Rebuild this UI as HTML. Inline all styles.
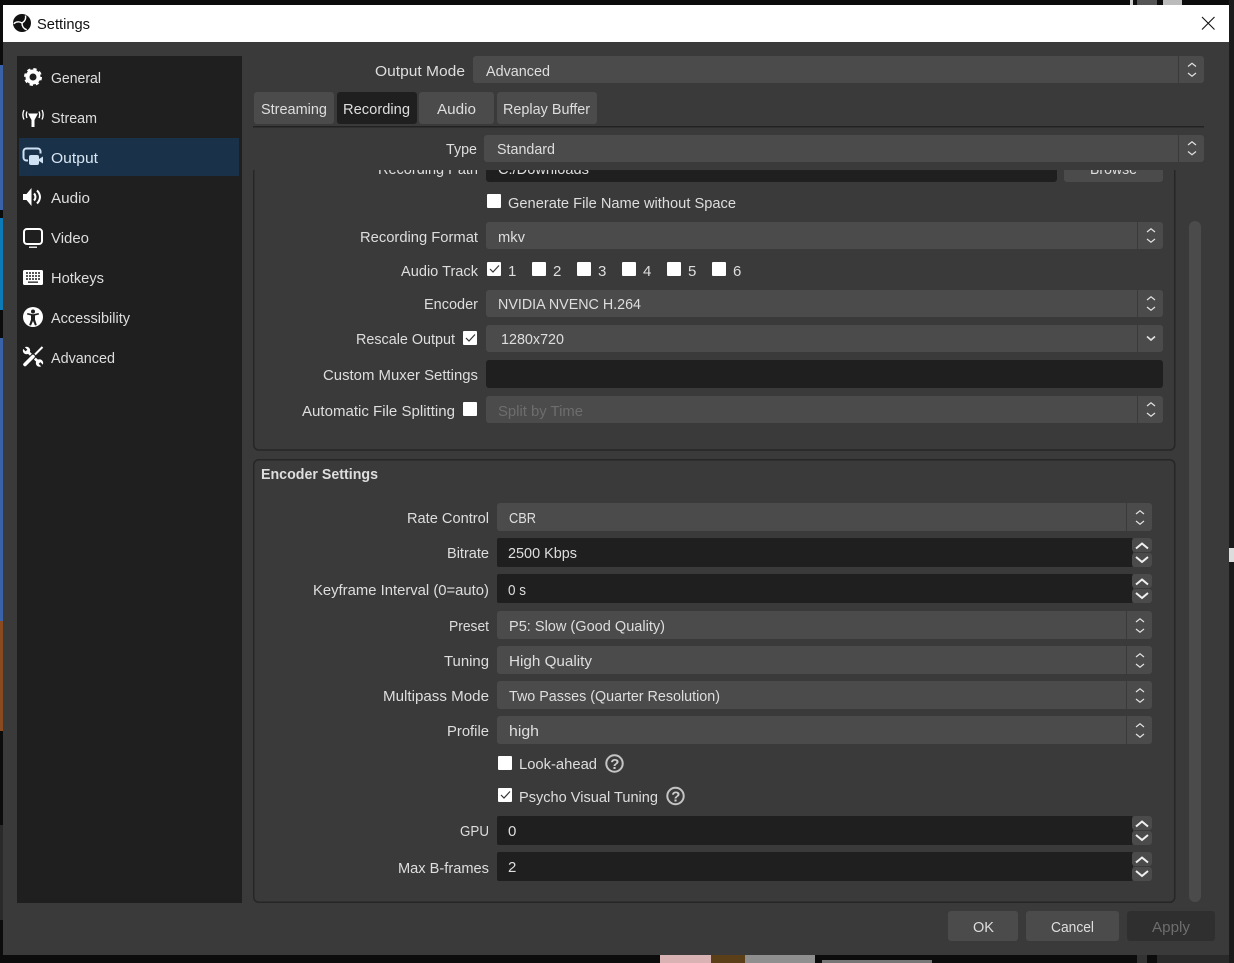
<!DOCTYPE html>
<html lang="en">
<head>
<meta charset="utf-8">
<title>Settings</title>
<style>
html,body{margin:0;padding:0;background:#0c0c0c;width:1234px;height:963px;overflow:hidden}
svg{display:block}
text{font-family:"Liberation Sans",sans-serif;font-size:15px;fill:#dedede}
.b{font-weight:bold}
.d{fill:#6d6d6d}
.t{fill:#111}
.c{fill:#4b4b4b}
.f{fill:#1f1f1f}
.dv{fill:#3a3a3a}
.ar{fill:none;stroke:#e2e2e2;stroke-width:1.2}
.sp{fill:none;stroke:#f0f0f0;stroke-width:2}
.ck{fill:#fff}
.tk{fill:none;stroke:#333;stroke-width:1.2}
.i{fill:#fff}
.is{fill:none;stroke:#fff}
</style>
</head>
<body>
<svg width="1234" height="963" viewBox="0 0 1234 963" xmlns="http://www.w3.org/2000/svg">
<defs><clipPath id="sc"><rect x="244" y="170" width="960" height="740"/></clipPath></defs>
<!-- desktop behind -->
<rect width="1234" height="963" fill="#0c0c0c"/>
<rect x="0" y="65" width="3" height="145" fill="#3a62a8"/>
<rect x="0" y="218" width="3" height="92" fill="#0b7ab6"/>
<rect x="0" y="338" width="3" height="283" fill="#3a62a8"/>
<rect x="0" y="621" width="3" height="110" fill="#8a4a20"/>
<rect x="0" y="825" width="3" height="95" fill="#2a2a2a"/>
<rect x="1229" y="0" width="5" height="963" fill="#1b1b1b"/>
<rect x="1229" y="548" width="5" height="14" fill="#ddd"/>
<rect x="1130" y="0" width="3" height="5" fill="#ccc"/>
<rect x="1137" y="0" width="20" height="5" fill="#555"/>
<rect x="1163" y="0" width="19" height="5" fill="#bbb"/>
<rect x="660" y="955" width="51" height="8" fill="#d9b3b3"/>
<rect x="711" y="955" width="34" height="8" fill="#5a3f18"/>
<rect x="745" y="955" width="70" height="8" fill="#8f8f8f"/>
<rect x="822" y="960" width="110" height="3" fill="#777"/>
<rect x="1137" y="955" width="10" height="8" fill="#333"/>
<rect x="1157" y="955" width="72" height="8" fill="#2a2a2a"/>
<!-- dialog -->
<rect x="3" y="5" width="1226" height="37" fill="#fff"/>
<rect x="3" y="42" width="1226" height="913" fill="#3a3a3a"/>
<circle cx="22" cy="23" r="9" fill="#111"/>
<path d="M22 23Q26.500 20.500 25.500 15.500" fill="none" stroke="#fff" stroke-width="1.400"/>
<path d="M22 23Q26.500 20.500 25.500 15.500" fill="none" stroke="#fff" stroke-width="1.400" transform="rotate(120 22 23)"/>
<path d="M22 23Q26.500 20.500 25.500 15.500" fill="none" stroke="#fff" stroke-width="1.400" transform="rotate(240 22 23)"/>
<text class="t" x="37" y="29" textLength="53" lengthAdjust="spacingAndGlyphs">Settings</text>
<path d="M1202 17l12.500 12.500M1214.500 17L1202 29.500" stroke="#111" stroke-width="1.100" fill="none"/>

<!-- sidebar -->
<rect x="17" y="56" width="225" height="847" fill="#1f1f1f"/>
<rect x="19" y="138" width="220" height="38" fill="#1a3249"/>
<text x="51" y="83" textLength="50" lengthAdjust="spacingAndGlyphs">General</text>
<text x="51" y="123" textLength="46" lengthAdjust="spacingAndGlyphs">Stream</text>
<text x="51" y="163" textLength="47" lengthAdjust="spacingAndGlyphs" style="fill:#d8e6f2">Output</text>
<text x="51" y="203" textLength="39" lengthAdjust="spacingAndGlyphs">Audio</text>
<text x="51" y="243" textLength="38" lengthAdjust="spacingAndGlyphs">Video</text>
<text x="51" y="283" textLength="53" lengthAdjust="spacingAndGlyphs">Hotkeys</text>
<text x="51" y="323" textLength="79" lengthAdjust="spacingAndGlyphs">Accessibility</text>
<text x="51" y="363" textLength="64" lengthAdjust="spacingAndGlyphs">Advanced</text>
<!-- gear -->
<circle cx="33" cy="77" r="5.500" class="is" stroke-width="4"/>
<circle cx="33" cy="77" r="8" fill="none" stroke="#fff" stroke-width="2" stroke-dasharray="3.300 3"/>
<!-- antenna -->
<path d="M28 113.500h10L34.500 120v7h-3v-7z" class="i"/>
<path d="M27 111.500a8 8 0 0 0 0 6.500M24 110a11 11 0 0 0 0 9.500M39 111.500a8 8 0 0 1 0 6.500M42 110a11 11 0 0 1 0 9.500" class="is" stroke-width="1.300"/>
<!-- output -->
<path d="M28 160.500h-1.500a3 3 0 0 1-3-3v-6a3 3 0 0 1 3-3h11a3 3 0 0 1 3 3v2" fill="none" stroke="#cfe2f3" stroke-width="2"/>
<rect x="29" y="155" width="10" height="10" rx="2" fill="#cfe2f3"/>
<path d="M39 159l4-2.500v7L39 161z" fill="#cfe2f3"/>
<!-- audio -->
<path d="M23 194h3.500l5-6v18l-5-6H23z" class="i"/>
<path d="M34 193.500a5 5 0 0 1 0 7M37 190.500a10 10 0 0 1 3 6.500 10 10 0 0 1-3 6.500" class="is" stroke-width="2"/>
<!-- video -->
<rect x="24" y="229" width="18" height="15" rx="3" class="is" stroke-width="2"/>
<rect x="29" y="246.500" width="8" height="1.500" fill="#ddd"/>
<!-- keyboard -->
<rect x="23" y="270" width="20" height="15" rx="1.500" class="i"/>
<path d="M26 273h15M26 276h15M26 279h15" stroke="#1f1f1f" stroke-width="1.400" stroke-dasharray="2 1" fill="none"/>
<rect x="28" y="281.500" width="10" height="1.300" fill="#1f1f1f"/>
<!-- accessibility -->
<circle cx="33" cy="317" r="10" class="i"/>
<circle cx="33" cy="311.500" r="2" fill="#1f1f1f"/>
<path d="M27 314.500l4 1v4l-1.800 5.500 1.800.5 2-4.500 2 4.500 1.800-.5-1.800-5.500v-4l4-1-.4-1.500-5.600 1.200-5.600-1.200z" fill="#1f1f1f"/>
<!-- advanced: wrench + screwdriver -->
<path d="M27 351L39.500 363" stroke="#fff" stroke-width="2.600" fill="none"/>
<circle cx="26.500" cy="350.500" r="3.700" class="i"/>
<path d="M26.500 350.500L23 347" stroke="#1f1f1f" stroke-width="2.400" fill="none"/>
<circle cx="39.500" cy="363" r="3.700" class="i"/>
<path d="M39.500 363L43.500 367" stroke="#1f1f1f" stroke-width="2.400" fill="none"/>
<path d="M42.500 347L35 354.500" stroke="#fff" stroke-width="2" fill="none"/>
<path d="M34 355.500L25 364.500" stroke="#1f1f1f" stroke-width="5.500" fill="none"/>
<path d="M33 356.500L25 364.500" stroke="#fff" stroke-width="3.600" stroke-linecap="round" fill="none"/>

<!-- top rows -->
<text x="375" y="76" textLength="90" lengthAdjust="spacingAndGlyphs">Output Mode</text>
<rect class="c" x="473" y="56" width="731" height="27" rx="3"/>
<rect class="dv" x="1178" y="56" width="1" height="27"/>
<text x="486" y="76" textLength="64" lengthAdjust="spacingAndGlyphs">Advanced</text>
<path class="ar" d="M1188 66.500l4-3.200 4 3.200M1188 73l4 3.200 4-3.200"/>

<rect class="c" x="254" y="92" width="80" height="32" rx="3"/>
<rect x="337" y="92" width="80" height="32" rx="3" fill="#1f1f1f"/>
<rect class="c" x="419" y="92" width="75" height="32" rx="3"/>
<rect class="c" x="497" y="92" width="100" height="32" rx="3"/>
<text x="261" y="114" textLength="66" lengthAdjust="spacingAndGlyphs">Streaming</text>
<text x="343" y="114" textLength="67" lengthAdjust="spacingAndGlyphs">Recording</text>
<text x="437" y="114" textLength="39" lengthAdjust="spacingAndGlyphs">Audio</text>
<text x="503" y="114" textLength="87" lengthAdjust="spacingAndGlyphs">Replay Buffer</text>
<rect x="253" y="126" width="951" height="1.500" fill="#222"/>

<text x="446" y="154" textLength="31" lengthAdjust="spacingAndGlyphs">Type</text>
<rect class="c" x="484" y="135" width="720" height="27" rx="3"/>
<rect class="dv" x="1178" y="135" width="1" height="27"/>
<text x="497" y="154" textLength="58" lengthAdjust="spacingAndGlyphs">Standard</text>
<path class="ar" d="M1188 145l4-3.200 4 3.200M1188 151.500l4 3.200 4-3.200"/>

<!-- scrollable -->
<g clip-path="url(#sc)">
<rect x="253.750" y="120" width="921" height="330" rx="5" fill="none" stroke="#262626" stroke-width="1.500"/>
<text x="378" y="174" textLength="100" lengthAdjust="spacingAndGlyphs">Recording Path</text>
<rect class="f" x="486" y="150" width="571" height="32" rx="3"/>
<text x="498" y="174" textLength="91" lengthAdjust="spacingAndGlyphs">C:/Downloads</text>
<rect class="c" x="1064" y="150" width="99" height="32" rx="3"/>
<text x="1090" y="174" textLength="47" lengthAdjust="spacingAndGlyphs">Browse</text>

<rect class="ck" x="487" y="194" width="14" height="14" rx="1"/>
<text x="508" y="208" textLength="228" lengthAdjust="spacingAndGlyphs">Generate File Name without Space</text>

<text x="360" y="242" textLength="118" lengthAdjust="spacingAndGlyphs">Recording Format</text>
<rect class="c" x="486" y="222" width="677" height="27" rx="3"/>
<rect class="dv" x="1137" y="222" width="1" height="27"/>
<text x="498" y="242" textLength="27" lengthAdjust="spacingAndGlyphs">mkv</text>
<path class="ar" d="M1147 232l4-3.200 4 3.200M1147 239l4 3.200 4-3.200"/>

<text x="401" y="276" textLength="77" lengthAdjust="spacingAndGlyphs">Audio Track</text>
<rect class="ck" x="487" y="262" width="14" height="14" rx="1"/>
<path class="tk" d="M490 269l3 3 6-6.500"/>
<text x="508" y="276">1</text>
<rect class="ck" x="532" y="262" width="14" height="14" rx="1"/>
<text x="553" y="276">2</text>
<rect class="ck" x="577" y="262" width="14" height="14" rx="1"/>
<text x="598" y="276">3</text>
<rect class="ck" x="622" y="262" width="14" height="14" rx="1"/>
<text x="643" y="276">4</text>
<rect class="ck" x="667" y="262" width="14" height="14" rx="1"/>
<text x="688" y="276">5</text>
<rect class="ck" x="712" y="262" width="14" height="14" rx="1"/>
<text x="733" y="276">6</text>

<text x="424" y="309" textLength="54" lengthAdjust="spacingAndGlyphs">Encoder</text>
<rect class="c" x="486" y="290" width="677" height="27" rx="3"/>
<rect class="dv" x="1137" y="290" width="1" height="27"/>
<text x="498" y="309" textLength="143" lengthAdjust="spacingAndGlyphs">NVIDIA NVENC H.264</text>
<path class="ar" d="M1147 300l4-3.200 4 3.200M1147 307l4 3.200 4-3.200"/>

<text x="356" y="344" textLength="99" lengthAdjust="spacingAndGlyphs">Rescale Output</text>
<rect class="ck" x="463" y="331" width="14" height="14" rx="1"/>
<path class="tk" d="M466 338l3 3 6-6.500"/>
<rect class="c" x="486" y="325" width="677" height="27" rx="3"/>
<rect class="dv" x="1137" y="325" width="1" height="27"/>
<text x="501" y="344" textLength="63" lengthAdjust="spacingAndGlyphs">1280x720</text>
<path class="ar" style="stroke-width:1.600" d="M1147 336.500l4 3.500 4-3.500"/>

<text x="323" y="380" textLength="155" lengthAdjust="spacingAndGlyphs">Custom Muxer Settings</text>
<rect class="f" x="486" y="360" width="677" height="28" rx="3"/>

<text x="302" y="416" textLength="153" lengthAdjust="spacingAndGlyphs">Automatic File Splitting</text>
<rect class="ck" x="463" y="402" width="14" height="14" rx="1"/>
<rect class="c" x="486" y="396" width="677" height="27" rx="3"/>
<rect class="dv" x="1137" y="396" width="1" height="27"/>
<text class="d" x="498" y="416" textLength="85" lengthAdjust="spacingAndGlyphs">Split by Time</text>
<path class="ar" d="M1147 406l4-3.200 4 3.200M1147 413l4 3.200 4-3.200"/>
</g>

<!-- scrollbar -->
<rect class="c" x="1189" y="221" width="12" height="681" rx="6"/>

<!-- Encoder group -->
<rect x="253.750" y="459.750" width="921" height="442.500" rx="5" fill="none" stroke="#262626" stroke-width="1.500"/>
<text class="b" x="261" y="479" textLength="117" lengthAdjust="spacingAndGlyphs">Encoder Settings</text>

<text x="407" y="523" textLength="82" lengthAdjust="spacingAndGlyphs">Rate Control</text>
<rect class="c" x="497" y="503" width="655" height="28" rx="3"/>
<rect class="dv" x="1126" y="503" width="1" height="28"/>
<text x="509" y="523" textLength="27" lengthAdjust="spacingAndGlyphs">CBR</text>
<path class="ar" d="M1136 514l4-3.200 4 3.200M1136 521l4 3.200 4-3.200"/>

<text x="447" y="558" textLength="42" lengthAdjust="spacingAndGlyphs">Bitrate</text>
<rect class="f" x="497" y="538" width="636" height="29" rx="2"/>
<rect class="c" x="1132" y="538" width="20" height="14" rx="3"/>
<rect class="c" x="1132" y="553" width="20" height="14" rx="3"/>
<path class="sp" d="M1136 548.500l6-5 6 5M1136 557l6 5 6-5"/>
<text x="508" y="558" textLength="69" lengthAdjust="spacingAndGlyphs">2500 Kbps</text>

<text x="313" y="595" textLength="176" lengthAdjust="spacingAndGlyphs">Keyframe Interval (0=auto)</text>
<rect class="f" x="497" y="574" width="636" height="29" rx="2"/>
<rect class="c" x="1132" y="574" width="20" height="14" rx="3"/>
<rect class="c" x="1132" y="589" width="20" height="14" rx="3"/>
<path class="sp" d="M1136 584.500l6-5 6 5M1136 593l6 5 6-5"/>
<text x="508" y="595" textLength="18" lengthAdjust="spacingAndGlyphs">0 s</text>

<text x="449" y="631" textLength="40" lengthAdjust="spacingAndGlyphs">Preset</text>
<rect class="c" x="497" y="611" width="655" height="28" rx="3"/>
<rect class="dv" x="1126" y="611" width="1" height="28"/>
<text x="509" y="631" textLength="156" lengthAdjust="spacingAndGlyphs">P5: Slow (Good Quality)</text>
<path class="ar" d="M1136 622l4-3.200 4 3.200M1136 629l4 3.200 4-3.200"/>

<text x="444" y="666" textLength="45" lengthAdjust="spacingAndGlyphs">Tuning</text>
<rect class="c" x="497" y="646" width="655" height="28" rx="3"/>
<rect class="dv" x="1126" y="646" width="1" height="28"/>
<text x="509" y="666" textLength="83" lengthAdjust="spacingAndGlyphs">High Quality</text>
<path class="ar" d="M1136 657l4-3.200 4 3.200M1136 664l4 3.200 4-3.200"/>

<text x="383" y="701" textLength="106" lengthAdjust="spacingAndGlyphs">Multipass Mode</text>
<rect class="c" x="497" y="681" width="655" height="28" rx="3"/>
<rect class="dv" x="1126" y="681" width="1" height="28"/>
<text x="509" y="701" textLength="211" lengthAdjust="spacingAndGlyphs">Two Passes (Quarter Resolution)</text>
<path class="ar" d="M1136 692l4-3.200 4 3.200M1136 699l4 3.200 4-3.200"/>

<text x="447" y="736" textLength="42" lengthAdjust="spacingAndGlyphs">Profile</text>
<rect class="c" x="497" y="716" width="655" height="28" rx="3"/>
<rect class="dv" x="1126" y="716" width="1" height="28"/>
<text x="509" y="736" textLength="30" lengthAdjust="spacingAndGlyphs">high</text>
<path class="ar" d="M1136 727l4-3.200 4 3.200M1136 734l4 3.200 4-3.200"/>

<rect class="ck" x="498" y="756" width="14" height="14" rx="1"/>
<text x="519" y="769" textLength="78" lengthAdjust="spacingAndGlyphs">Look-ahead</text>
<circle cx="614.500" cy="763.500" r="8.200" fill="none" stroke="#c4c4c4" stroke-width="2"/>
<text x="610.300" y="769" class="b" style="font-size:15px;fill:#cfcfcf">?</text>

<rect class="ck" x="498" y="788" width="14" height="14" rx="1"/>
<path class="tk" d="M501 795l3 3 6-6.500"/>
<text x="519" y="802" textLength="139" lengthAdjust="spacingAndGlyphs">Psycho Visual Tuning</text>
<circle cx="675.500" cy="796" r="8.200" fill="none" stroke="#c4c4c4" stroke-width="2"/>
<text x="671.300" y="801.500" class="b" style="font-size:15px;fill:#cfcfcf">?</text>

<text x="460" y="836" textLength="29" lengthAdjust="spacingAndGlyphs">GPU</text>
<rect class="f" x="497" y="816" width="636" height="29" rx="2"/>
<rect class="c" x="1132" y="816" width="20" height="14" rx="3"/>
<rect class="c" x="1132" y="831" width="20" height="14" rx="3"/>
<path class="sp" d="M1136 826.500l6-5 6 5M1136 835l6 5 6-5"/>
<text x="508" y="836">0</text>

<text x="398" y="873" textLength="91" lengthAdjust="spacingAndGlyphs">Max B-frames</text>
<rect class="f" x="497" y="852" width="636" height="29" rx="2"/>
<rect class="c" x="1132" y="852" width="20" height="14" rx="3"/>
<rect class="c" x="1132" y="867" width="20" height="14" rx="3"/>
<path class="sp" d="M1136 862.500l6-5 6 5M1136 871l6 5 6-5"/>
<text x="508" y="872">2</text>

<!-- buttons -->
<rect class="c" x="948" y="911" width="70" height="30" rx="3"/>
<text x="973" y="932" textLength="21" lengthAdjust="spacingAndGlyphs">OK</text>
<rect class="c" x="1026" y="911" width="93" height="30" rx="3"/>
<text x="1051" y="932" textLength="43" lengthAdjust="spacingAndGlyphs">Cancel</text>
<rect x="1127" y="911" width="88" height="30" rx="3" fill="#2f2f2f"/>
<text class="d" x="1152" y="932" textLength="38" lengthAdjust="spacingAndGlyphs">Apply</text>
</svg>
</body>
</html>
